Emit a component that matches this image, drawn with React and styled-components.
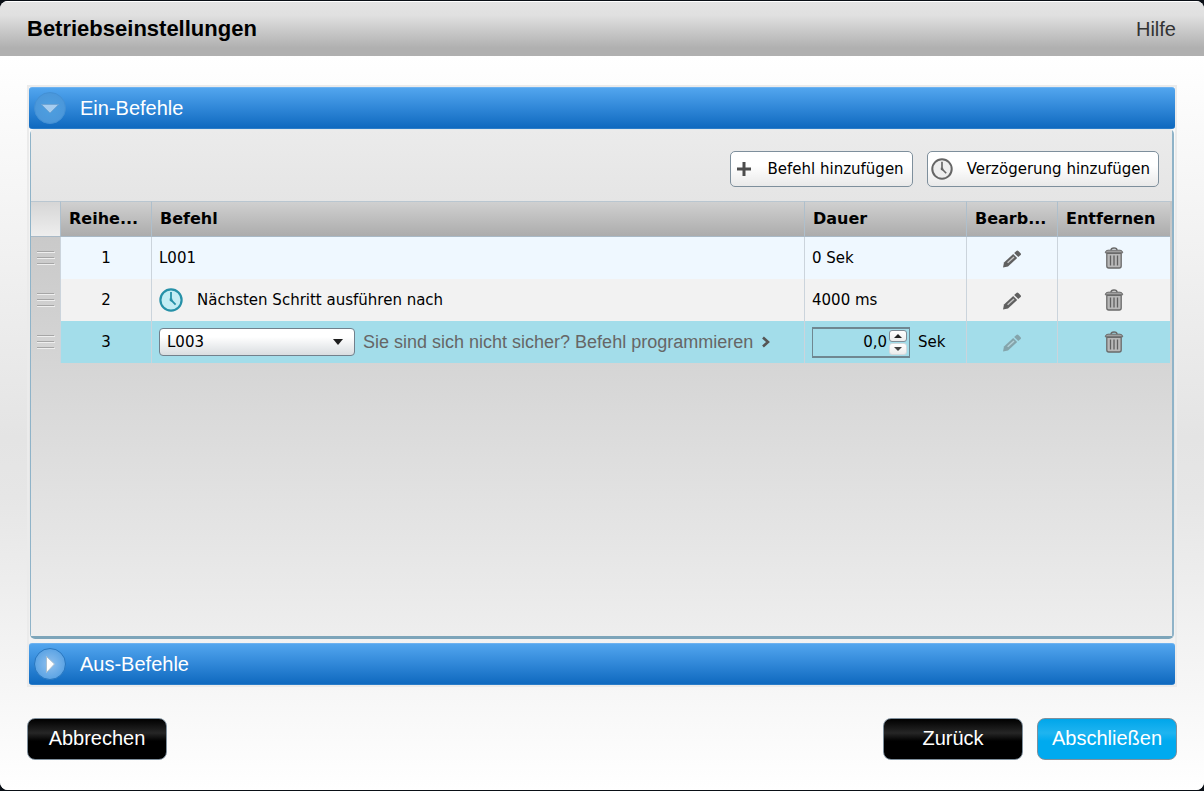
import React, { useState } from 'react';
import styled, { createGlobalStyle } from 'styled-components';

const rows = [
  { id: 1, command: 'L001', duration: '0 Sek' },
  { id: 2, command: 'Nächsten Schritt ausführen nach', duration: '4000 ms', delay: true },
  { id: 3, command: 'L003', duration: '0,0', editing: true },
];

function ClockIcon({ size, color, fill }) {
  return (
    <svg width={size} height={size} viewBox="0 0 24 24" aria-hidden="true">
      <circle cx="12" cy="12" r="10.6" fill={fill} stroke={color} strokeWidth="2.2" />
      <path d="M12 4v8l4.6 4.6" fill="none" stroke={color} strokeWidth="1.8" />
      <path d="M10.6 10.5h2.6l.6 3.4-3-.8z" fill={color} />
    </svg>
  );
}

function PlusIcon() {
  return (
    <svg width="20" height="22" viewBox="0 0 20 22" aria-hidden="true">
      <path d="M3 11h14M10 4v14" stroke="#4c4c4c" strokeWidth="3" />
    </svg>
  );
}

function PencilIcon() {
  return (
    <svg width="20" height="18" viewBox="0 0 20 18" aria-hidden="true">
      <path d="M1 17.400 2 12.600 11.200 4 15.200 8 6 16.400z" fill="#606060" />
      <path d="M12.200 3 14.400.9Q15.400.2 16.400 1L18.600 3.200Q19.400 4.200 18.600 5.100L16.300 7.100z" fill="#606060" />
      <path d="M5.600 12.800 12 6.900" stroke="#c4c4c4" strokeWidth="1.4" />
    </svg>
  );
}

function TrashIcon() {
  return (
    <svg width="20" height="22" viewBox="0 0 20 22" aria-hidden="true">
      <path d="M7 3.200Q7 1 10 1t3 2.200" fill="none" stroke="#6a6a6a" strokeWidth="1.5" />
      <path d="M1.200 5.800Q1.600 3.200 4 3.200h12q2.400 0 2.800 2.600z" fill="#a0a0a0" stroke="#6a6a6a" />
      <path d="M2.800 6.400h14.400V19q0 2-2 2H4.800q-2 0-2-2z" fill="#b8b8b8" stroke="#6a6a6a" strokeWidth="1.3" />
      <path d="M6.500 8.500v10M10 8.500v10M13.500 8.500v10" stroke="#606060" strokeWidth="1.3" />
    </svg>
  );
}

function GripIcon() {
  return (
    <svg width="18" height="16" viewBox="0 0 18 16" aria-hidden="true">
      <path d="M0 2.500h18M0 8.500h18M0 14.500h18" stroke="#eee" />
      <path d="M0 1.500h17M0 7.500h17M0 13.500h17" stroke="#a6a6a6" />
    </svg>
  );
}

function Disclosure({ open }) {
  return (
    <svg width="34" height="34" viewBox="0 0 34 34" aria-hidden="true">
      <defs>
        <radialGradient id={open ? 'discOpen' : 'discClosed'}>
          <stop offset="0" stopColor={open ? '#4d9fe0' : '#8fc0ee'} />
          <stop offset="1" stopColor={open ? '#4b97da' : '#5ba3e4'} />
        </radialGradient>
      </defs>
      <circle
        cx="17"
        cy="17"
        r="15.5"
        fill={`url(#${open ? 'discOpen' : 'discClosed'})`}
        stroke={open ? '#4390d4' : '#2877c0'}
      />
      {open ? (
        <path d="M8.500 13.500h17L17 22z" fill="#a5cdf0" stroke="#6fa5d4" />
      ) : (
        <path d="M13.500 9.500v16L21.500 17z" fill="#fff" stroke="#a9bfd0" />
      )}
    </svg>
  );
}

function App() {
  const [command, setCommand] = useState('L003');
  const [duration, setDuration] = useState('0,0');

  const step = (delta) => {
    const next = Math.max(0, parseFloat(duration.replace(',', '.')) + delta);
    setDuration(next.toFixed(1).replace('.', ','));
  };

  return (
    <>
      <GlobalStyle />
      <Window>
        <TitleBar>
          <h1>Betriebseinstellungen</h1>
          <HelpLink href="#hilfe">Hilfe</HelpLink>
        </TitleBar>

        <Content>
          <Accordion>
            <SectionHeader aria-expanded="true">
              <Disclosure open />
              Ein-Befehle
            </SectionHeader>

            <Panel>
              <Toolbar>
                <ToolButton>
                  <PlusIcon />
                  Befehl hinzufügen
                </ToolButton>
                <ToolButton>
                  <ClockIcon size={22} color="#666" fill="#eee" />
                  Verzögerung hinzufügen
                </ToolButton>
              </Toolbar>

              <TableArea>
                <Table>
                  <colgroup>
                    <Col $width={29} />
                    <Col $width={91} />
                    <Col />
                    <Col $width={162} />
                    <Col $width={91} />
                    <Col $width={113} />
                  </colgroup>
                  <thead>
                    <tr>
                      <CornerCell />
                      <HeadCell>Reihe...</HeadCell>
                      <HeadCell>Befehl</HeadCell>
                      <HeadCell>Dauer</HeadCell>
                      <HeadCell>Bearb...</HeadCell>
                      <HeadCell>Entfernen</HeadCell>
                    </tr>
                  </thead>
                  <tbody>
                    {rows.map((row) => (
                      <Row key={row.id} $selected={row.editing}>
                        <GripCell>
                          <GripIcon />
                        </GripCell>
                        <Cell $center>{row.id}</Cell>
                        <Cell>
                          <CellContent $gap={row.editing ? 8 : 14}>
                            {row.delay && <ClockIcon size={24} color="#2691a8" fill="#c3edf4" />}
                            {row.editing ? (
                              <>
                                <SelectBox>
                                  <select
                                    aria-label="Befehl"
                                    value={command}
                                    onChange={(e) => setCommand(e.target.value)}
                                  >
                                    <option>L001</option>
                                    <option>L003</option>
                                  </select>
                                  <svg width="10" height="6" viewBox="0 0 10 6" aria-hidden="true">
                                    <path d="M0 0h10L5 6z" fill="#1e1e1e" />
                                  </svg>
                                </SelectBox>
                                <ProgramLink href="#programmieren">
                                  Sie sind sich nicht sicher? Befehl programmieren
                                  <svg width="10" height="12" viewBox="0 0 10 12" aria-hidden="true">
                                    <path d="M2 1.500 7 6l-5 4.500" fill="none" stroke="#555" strokeWidth="2.6" />
                                  </svg>
                                </ProgramLink>
                              </>
                            ) : (
                              row.command
                            )}
                          </CellContent>
                        </Cell>
                        <Cell>
                          {row.editing ? (
                            <CellContent $gap={8}>
                              <Stepper>
                                <input
                                  aria-label="Dauer"
                                  value={duration}
                                  onChange={(e) => setDuration(e.target.value)}
                                />
                                <StepButtons>
                                  <StepButton aria-label="Erhöhen" onClick={() => step(0.1)}>
                                    <svg width="8" height="4" viewBox="0 0 8 4" aria-hidden="true">
                                      <path d="M0 4h8L4 0z" fill="#222" />
                                    </svg>
                                  </StepButton>
                                  <StepButton aria-label="Verringern" onClick={() => step(-0.1)} $down>
                                    <svg width="8" height="4" viewBox="0 0 8 4" aria-hidden="true">
                                      <path d="M0 0h8L4 4z" fill="#444" />
                                    </svg>
                                  </StepButton>
                                </StepButtons>
                              </Stepper>
                              Sek
                            </CellContent>
                          ) : (
                            row.duration
                          )}
                        </Cell>
                        <Cell $center>
                          <IconButton aria-label="Bearbeiten" disabled={row.editing}>
                            <PencilIcon />
                          </IconButton>
                        </Cell>
                        <Cell $center>
                          <IconButton aria-label="Entfernen">
                            <TrashIcon />
                          </IconButton>
                        </Cell>
                      </Row>
                    ))}
                  </tbody>
                </Table>
              </TableArea>
            </Panel>

            <SectionHeader aria-expanded="false">
              <Disclosure />
              Aus-Befehle
            </SectionHeader>
          </Accordion>

          <Footer>
            <ActionButton>Abbrechen</ActionButton>
            <ButtonGroup>
              <ActionButton>Zurück</ActionButton>
              <ActionButton $primary>Abschließen</ActionButton>
            </ButtonGroup>
          </Footer>
        </Content>
      </Window>
    </>
  );
}

export default App;

const GlobalStyle = createGlobalStyle`
  * {
    box-sizing: border-box;
  }

  body {
    margin: 0;
    background: #0a0f16;
    font-family: "Liberation Sans", Arial, sans-serif;
    color: #000;
  }

  button, input, select {
    margin: 0;
    padding: 0;
    border: 0;
    background: none;
    font: inherit;
    color: inherit;
  }

  button {
    cursor: pointer;
  }

  svg {
    display: block;
    flex-shrink: 0;
  }
`

const Window = styled.div`
  display: flex;
  flex-direction: column;
  min-height: calc(100vh - 2px);
  margin: 1px 0;
  border-radius: 8px;
  overflow: hidden;
  background: #fff;
`

const TitleBar = styled.header`
  display: flex;
  align-items: center;
  justify-content: space-between;
  height: 55px;
  padding: 0 28px 0 27px;
  border-top: 1px solid #fff;
  background: linear-gradient(#e4e4e4 0%, #e0e0e0 25%, #b0b0b0 85%, #b0b0b0 100%);

  h1 {
    margin: 0;
    font-size: 22px;
    line-height: 26px;
  }
`

const HelpLink = styled.a`
  font-size: 20px;
  line-height: 26px;
  color: #333;
  text-decoration: none;
`

const Content = styled.main`
  flex: 1;
  display: flex;
  flex-direction: column;
  padding: 29px 27px 30px;
  background: linear-gradient(#fff 0%, #e4e4e4 52%, #e6e6e6 60%, #fff 100%);
`

const Accordion = styled.section`
  flex: 1;
  display: flex;
  flex-direction: column;
  border: 2px solid #ebebeb;
`

const SectionHeader = styled.button`
  display: flex;
  align-items: center;
  gap: 13px;
  height: 42px;
  padding: 0 4px;
  border-radius: 3px;
  border-top: 1px solid #6db2f0;
  border-bottom: 1px solid #2a7cc8;
  background: linear-gradient(#52a5ee, #3087d8 50%, #0f69bf);
  color: #fff;
  font-size: 20px;
  line-height: 24px;
`

const Panel = styled.div`
  flex: 1;
  display: flex;
  flex-direction: column;
  margin: 0 1px 4px;
  border: 1px solid #8fb3c8;
  border-top-color: #e4e9ec;
  border-right-width: 2px;
  border-bottom: 3px solid #7da5ba;
  border-radius: 5px;
  font-family: "DejaVu Sans", Verdana, sans-serif;
  font-size: 15px;
  line-height: 20px;
`

const Toolbar = styled.div`
  display: flex;
  justify-content: flex-end;
  gap: 14px;
  padding: 21px 13px 14px;
  background: linear-gradient(#ebebeb, #e5e5e5);
`

const ToolButton = styled.button`
  display: flex;
  align-items: center;
  gap: 14px;
  height: 36px;
  padding: 0 8px 0 3px;
  border: 1px solid #7e8f9c;
  border-radius: 5px;
  background: linear-gradient(#fff 40%, #e9e9e9);
`

const TableArea = styled.div`
  flex: 1;
  padding-right: 2px;
  background: linear-gradient(#c6c6c6, #d5d5d5 37%, #eee);
`

const Table = styled.table`
  width: 100%;
  table-layout: fixed;
  border-collapse: separate;
  border-spacing: 0;
`

const Col = styled.col`
  width: ${props => props.$width ? `${props.$width}px` : 'auto'};
`

const HeadCell = styled.th`
  height: 36px;
  padding: 0 8px;
  border-left: 1px solid #aebfcc;
  border-top: 1px solid #b9c6d0;
  border-bottom: 1px solid #a9b9c6;
  background: linear-gradient(#d0d0d0, #acacac);
  text-align: left;
  font-size: 16px;
  white-space: nowrap;
`

const CornerCell = styled.td`
  border-top: 1px solid #b9c6d0;
  border-bottom: 1px solid #a9b9c6;
  background: linear-gradient(#d6d6d6, #eee);
`

const Cell = styled.td`
  height: 42px;
  padding: 0 7px;
  border-left: 1px solid #cbd4dc;
  text-align: ${props => props.$center ? 'center' : 'left'};
  white-space: nowrap;
`

const Row = styled.tr`
  ${Cell} {
    background: ${props => props.$selected ? '#a3ddea' : '#eff8ff'};
  }

  &:nth-child(2) ${Cell} {
    background: #f2f2f2;
  }
`

const GripCell = styled.td`
  padding: 0 6px;
`

const CellContent = styled.div`
  display: flex;
  align-items: center;
  gap: ${props => props.$gap}px;
`

const SelectBox = styled.div`
  display: flex;
  align-items: center;
  position: relative;
  width: 196px;
  height: 28px;
  border: 1px solid #72808c;
  border-radius: 4px;
  background: linear-gradient(#fff 30%, #d9dde0);

  select {
    width: 100%;
    height: 100%;
    padding-left: 7px;
    appearance: none;
  }

  svg {
    position: absolute;
    right: 11px;
    pointer-events: none;
  }
`

const ProgramLink = styled.a`
  display: flex;
  align-items: center;
  gap: 8px;
  font-family: "Liberation Sans", Arial, sans-serif;
  font-size: 18px;
  color: #666;
  text-decoration: none;
`

const Stepper = styled.div`
  display: flex;
  align-items: center;
  gap: 2px;
  width: 98px;
  height: 31px;
  padding-right: 2px;
  border: 1px solid #6f8791;
  border-width: 2px 1px;

  input {
    flex: 1;
    min-width: 0;
    text-align: right;
  }
`

const StepButtons = styled.div`
  display: flex;
  flex-direction: column;
  gap: 1px;
`

const StepButton = styled.button`
  display: flex;
  align-items: center;
  justify-content: center;
  width: 18px;
  height: 12px;
  border: 1px solid ${props => props.$down ? '#d4dadd' : '#7f8c96'};
  border-radius: 3px;
  background: linear-gradient(#fff, #ececec);
`

const IconButton = styled.button`
  display: inline-block;
  vertical-align: middle;
  opacity: ${props => props.disabled ? 0.45 : 1};
`

const Footer = styled.footer`
  display: flex;
  justify-content: space-between;
  margin-top: 31px;
`

const ButtonGroup = styled.div`
  display: flex;
  gap: 14px;
`

const ActionButton = styled.button`
  width: 140px;
  height: 42px;
  padding-bottom: 2px;
  border: 1px solid #7f8f9c;
  border-radius: 8px;
  background: ${props => props.$primary
    ? 'linear-gradient(#00a6ea, #1fb4f0 35%, #00aaef 55%, #00aaef)'
    : 'linear-gradient(#000, #262626 35%, #000 55%, #000)'};
  color: #fff;
  font-size: 20px;
  line-height: 24px;
`
